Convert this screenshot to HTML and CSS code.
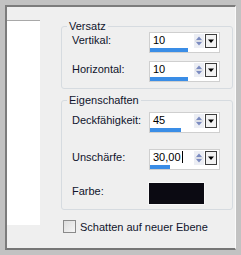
FILE: index.html
```html
<!DOCTYPE html>
<html lang="de">
<head>
    <meta charset="UTF-8">
    <title>Schatten</title>
    <link rel="stylesheet" href="styles.css">
</head>
<body>

    <div class="window">
        <div class="preview"></div>

        <div class="settings">
            <fieldset class="group group-offset">
                <legend>Versatz</legend>
                <div class="row">
                    <span class="label">Vertikal:</span>
                    <div class="spin">
                        <div class="spin-row">
                            <span class="spin-text">10</span>
                            <span class="spin-arrows"><svg width="10" height="14" viewBox="0 0 10 14"><path d="M2 6 L5 2.5 L8 6 Z M2 8 L5 11.5 L8 8 Z" fill="#7b8bc0"/><line x1="1" y1="7" x2="9" y2="7" stroke="#c8ccd8"/></svg></span>
                            <span class="spin-drop"><svg width="10" height="12" viewBox="0 0 10 12"><path d="M2 4.5 L8 4.5 L5 8 Z" fill="#000"/></svg></span>
                        </div>
                        <div class="spin-bar" style="width: 38px"></div>
                    </div>
                </div>
                <div class="row">
                    <span class="label">Horizontal:</span>
                    <div class="spin">
                        <div class="spin-row">
                            <span class="spin-text">10</span>
                            <span class="spin-arrows"><svg width="10" height="14" viewBox="0 0 10 14"><path d="M2 6 L5 2.5 L8 6 Z M2 8 L5 11.5 L8 8 Z" fill="#7b8bc0"/><line x1="1" y1="7" x2="9" y2="7" stroke="#c8ccd8"/></svg></span>
                            <span class="spin-drop"><svg width="10" height="12" viewBox="0 0 10 12"><path d="M2 4.5 L8 4.5 L5 8 Z" fill="#000"/></svg></span>
                        </div>
                        <div class="spin-bar" style="width: 38px"></div>
                    </div>
                </div>
            </fieldset>

            <fieldset class="group group-props">
                <legend>Eigenschaften</legend>
                <div class="row">
                    <span class="label">Deckfähigkeit:</span>
                    <div class="spin">
                        <div class="spin-row">
                            <span class="spin-text">45</span>
                            <span class="spin-arrows"><svg width="10" height="14" viewBox="0 0 10 14"><path d="M2 6 L5 2.5 L8 6 Z M2 8 L5 11.5 L8 8 Z" fill="#7b8bc0"/><line x1="1" y1="7" x2="9" y2="7" stroke="#c8ccd8"/></svg></span>
                            <span class="spin-drop"><svg width="10" height="12" viewBox="0 0 10 12"><path d="M2 4.5 L8 4.5 L5 8 Z" fill="#000"/></svg></span>
                        </div>
                        <div class="spin-bar" style="width: 31px"></div>
                    </div>
                </div>
                <div class="row">
                    <span class="label">Unschärfe:</span>
                    <div class="spin">
                        <div class="spin-row">
                            <span class="spin-text">30,00<span class="caret"></span></span>
                            <span class="spin-arrows"><svg width="10" height="14" viewBox="0 0 10 14"><path d="M2 6 L5 2.5 L8 6 Z M2 8 L5 11.5 L8 8 Z" fill="#7b8bc0"/><line x1="1" y1="7" x2="9" y2="7" stroke="#c8ccd8"/></svg></span>
                            <span class="spin-drop"><svg width="10" height="12" viewBox="0 0 10 12"><path d="M2 4.5 L8 4.5 L5 8 Z" fill="#000"/></svg></span>
                        </div>
                        <div class="spin-bar" style="width: 20px"></div>
                    </div>
                </div>
                <div class="row row-color">
                    <span class="label">Farbe:</span>
                    <div class="swatch"></div>
                </div>
            </fieldset>

            <label class="check">
                <span class="box"></span>
                Schatten auf neuer Ebene
            </label>
        </div>
    </div>

</body>
</html>
```

FILE: styles.css
```css
body {
    margin: 0;
    width: 241px;
    height: 255px;
    background-color: #c2c2c2;
    font-family: "Liberation Sans", Arial, sans-serif;
    font-size: 11px;
    color: #10142c;
    overflow: hidden;
}

.window {
    display: flex;
    margin: 5px 5px 0 5px;
    height: 241px;
    background-color: #efefef;
    border-top: 2px solid #7c7c7c;
    border-left: 2px solid #7c7c7c;
    border-right: 1px solid #fafafa;
    border-bottom: 2px solid #767676;
}

.preview {
    width: 33px;
    height: 205px;
    margin-top: 13px;
    background-color: #fff;
    border-top: 1px solid #a8a8a8;
    box-sizing: border-box;
}

.settings {
    margin-left: 21px;
    width: 172px;
}

.group {
    margin: 0;
    padding: 0 0 0 10px;
    border: 1px solid #d6dbe0;
    border-radius: 3px;
    min-width: 0;
}

.group legend {
    margin-left: -5px;
    padding: 0 2px;
    line-height: 11px;
    font-size: 11px;
}

.group-offset {
    margin-top: 14px;
    padding-bottom: 6px;
}

.group-props {
    margin-top: 6px;
    padding-bottom: 4px;
}

.row {
    display: flex;
    align-items: center;
    margin-top: 8px;
}

.group-offset .row:first-of-type {
    margin-top: 0;
}

.group-props .row {
    margin-top: 16px;
}

.group-props .row:first-of-type {
    margin-top: 6px;
}

.group-props .row-color {
    margin-top: 12px;
}

.label {
    width: 77px;
    padding-bottom: 6px;
}

.spin {
    display: flex;
    flex-direction: column;
    width: 71px;
    height: 21px;
    box-sizing: border-box;
    background-color: #fff;
    border: 1px solid #cfcfcf;
}

.spin-row {
    display: flex;
    height: 15px;
}

.spin-text {
    flex: 1;
    padding-left: 3px;
    line-height: 15px;
    color: #000;
}

.caret {
    display: inline-block;
    width: 1px;
    height: 12px;
    margin-left: 1px;
    vertical-align: -2px;
    background-color: #000;
}

.spin-arrows {
    width: 10px;
    height: 14px;
    margin-top: 1px;
    background-color: #eceef4;
}

.spin-arrows svg,
.spin-drop svg {
    display: block;
}

.spin-drop {
    width: 10px;
    height: 12px;
    margin: 1px 2px 0 1px;
    background-color: #f2f2f2;
    border: 1px solid #3c3c3c;
}

.spin-bar {
    height: 4px;
    margin-top: auto;
    background-color: #3a8de6;
}

.swatch {
    width: 57px;
    height: 23px;
    margin-left: -1px;
    background-color: #0b0a12;
    border: 1px solid #f8f8f8;
    box-sizing: border-box;
}

.check {
    display: flex;
    align-items: center;
    gap: 4px;
    margin-top: 10px;
    margin-left: 2px;
}

.check .box {
    width: 13px;
    height: 13px;
    box-sizing: border-box;
    border: 1px solid #8a8a8a;
    background: linear-gradient(135deg, #dcdcdc, #f6f6f6);
}
```
